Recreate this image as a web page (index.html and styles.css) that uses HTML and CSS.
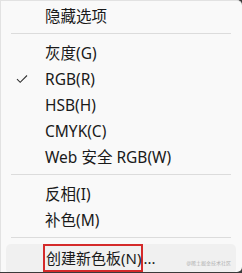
FILE: index.html
```html
<!DOCTYPE html>
<html lang="zh-CN">
<head>
    <meta charset="UTF-8">
    <title>色板菜单</title>
    <link rel="stylesheet" href="styles.css">
</head>
<body>
    <div class="menu">
        <div class="menu-item">隐藏选项</div>
        <div class="menu-sep"></div>
        <div class="menu-item">灰度(G)</div>
        <div class="menu-item">
            <svg class="check" width="12" height="10" viewBox="0 0 12 10">
                <path d="M1 5.2 L4.2 8.3 L11 1.5" fill="none" stroke="#333" stroke-width="1.1"/>
            </svg>
            RGB(R)
        </div>
        <div class="menu-item">HSB(H)</div>
        <div class="menu-item">CMYK(C)</div>
        <div class="menu-item">Web 安全 RGB(W)</div>
        <div class="menu-sep"></div>
        <div class="menu-item">反相(I)</div>
        <div class="menu-item">补色(M)</div>
        <div class="menu-sep"></div>
        <div class="menu-item active">
            <span class="marked">创建新色板(N)</span>...
            <span class="watermark">@稀土掘金技术社区</span>
        </div>
    </div>
</body>
</html>
```

FILE: styles.css
```css
body {
    margin: 0;
    background-color: #3a3a3a;
    font-family: "Noto Sans", "Noto Sans CJK SC", sans-serif;
}
.menu {
    height: 272px;
    background-color: #f9f9f9;
    border-left: 1px solid #e2e2e2;
    border-top: 1px solid #e2e2e2;
    border-radius: 0 5px 5px 0;
    padding-top: 2px;
    box-sizing: border-box;
    overflow: hidden;
}
.menu-item {
    position: relative;
    height: 26px;
    line-height: 26px;
    padding-left: 44px;
    font-size: 15.5px;
    color: #1a1a1a;
}
.menu-sep {
    height: 1px;
    background-color: #dcdcdc;
    margin: 4px 11px 6px 10px;
}
.check {
    position: absolute;
    left: 15px;
    top: 8px;
}
.menu-item.active {
    height: 30px;
    line-height: 26px;
    margin: 0 6px 0 5px;
    padding-left: 37px;
    font-size: 15px;
    background-color: #f0f0f0;
    border-radius: 5px;
}
.marked {
    display: inline-block;
    height: 24px;
    line-height: 24px;
    padding: 0 0 0 1px;
    border: 2px solid #d42a2a;
}
.watermark {
    position: absolute;
    right: 5px;
    top: 16px;
    font-size: 5px;
    line-height: 6px;
    color: #b0b0b0;
}
```
